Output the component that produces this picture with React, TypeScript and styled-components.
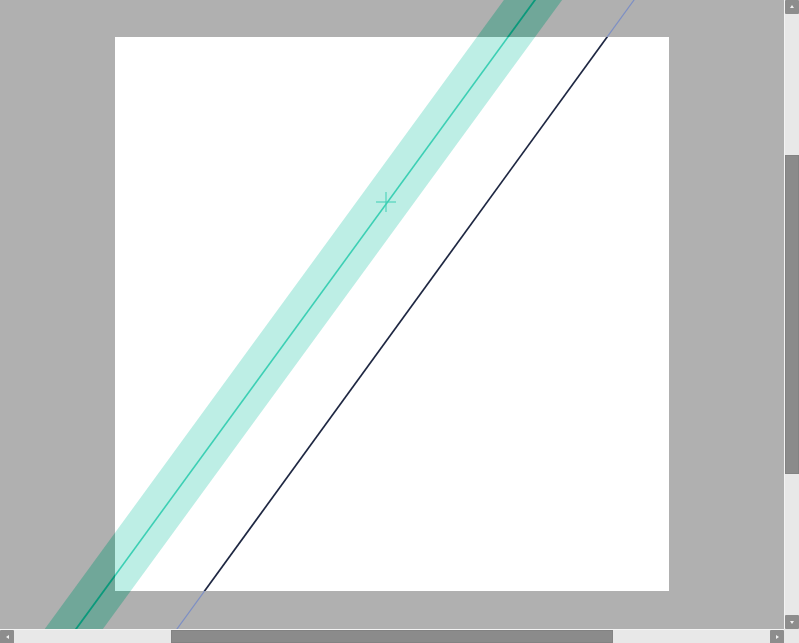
import React from 'react'
import styled, {createGlobalStyle} from 'styled-components'

const GlobalStyle = createGlobalStyle`
  html, body {
    margin: 0;
    padding: 0;
    overflow: hidden;
    background: #b0b0b0;
    font-family: "Liberation Sans", Arial, sans-serif;
  }
`

const Window = styled.div`
  width: 799px;
  height: 643px;
  display: grid;
  grid-template-columns: 784px 15px;
  grid-template-rows: 629px 14px;
`

const Viewport = styled.div`
  position: relative;
  overflow: hidden;
  background: #b0b0b0;
  padding: 37px 0 0 115px;
  box-sizing: border-box;
`

const Page = styled.div`
  width: 554px;
  height: 554px;
  background: #ffffff;
`

const Overlay = styled.svg`
  position: absolute;
  left: 0;
  top: 0;
  width: 784px;
  height: 629px;
`

const VTrack = styled.div`
  display: flex;
  flex-direction: column;
  background: #e8e8e8;
  border-left: 1px solid #f4f4f4;
  box-sizing: border-box;
`

const HTrack = styled.div`
  display: flex;
  background: #e8e8e8;
  border-top: 1px solid #f4f4f4;
  box-sizing: border-box;
`

const Corner = styled.div`
  background: #e8e8e8;
`

const ArrowButton = styled.div<{$dir: 'up' | 'down' | 'left' | 'right'}>`
  flex: none;
  width: 14px;
  height: 14px;
  background: #8d8d8d;
  border-radius: 1px;
  display: flex;
  align-items: center;
  justify-content: center;

  &::after {
    content: '';
    width: 0;
    height: 0;
    border: 2px solid transparent;
    ${p => p.$dir === 'up' && 'border-bottom: 3px solid #f0f0f0; border-top-width: 0; margin-top: -1px;'}
    ${p => p.$dir === 'down' && 'border-top: 3px solid #f0f0f0; border-bottom-width: 0;'}
    ${p => p.$dir === 'left' && 'border-right: 3px solid #f0f0f0; border-left-width: 0;'}
    ${p => p.$dir === 'right' && 'border-left: 3px solid #f0f0f0; border-right-width: 0;'}
  }
`

const Spacer = styled.div<{$size: number}>`
  flex: none;
  ${p => `flex-basis: ${p.$size}px;`}
`

const Thumb = styled.div<{$size: number}>`
  flex: none;
  ${p => `flex-basis: ${p.$size}px;`}
  background: #8b8b8b;
  border: 1px solid #838383;
  box-sizing: border-box;
`

const Fill = styled.div`
  flex: 1;
`

// guide geometry: x = a - k * y
const lineAt = (a: number, k: number) => ({
  x1: a - k * -40,
  y1: -40,
  x2: a - k * 680,
  y2: 680,
})

const PAGE = {x: 115, y: 37, w: 554, h: 554}

function Guides() {
  const band = lineAt(533, 0.73)
  const guide = lineAt(535, 0.7297)
  const stroke = lineAt(634, 0.7266)
  const cx = 386
  const cy = 202

  return (
    <Overlay viewBox="0 0 784 629">
      <defs>
        <clipPath id="inside">
          <rect x={PAGE.x} y={PAGE.y} width={PAGE.w} height={PAGE.h} />
        </clipPath>
        <clipPath id="outside">
          <path
            clipRule="evenodd"
            d={`M0 0H784V629H0Z M${PAGE.x} ${PAGE.y}V${PAGE.y + PAGE.h}H${PAGE.x + PAGE.w}V${PAGE.y}Z`}
          />
        </clipPath>
      </defs>

      <g clipPath="url(#outside)">
        <line {...band} stroke="#70a799" strokeWidth={47} />
        <line {...guide} stroke="#0b997b" strokeWidth={1.8} />
        <line {...stroke} stroke="#7d8fc4" strokeWidth={1.2} />
      </g>

      <g clipPath="url(#inside)">
        <line {...band} stroke="#bdeee5" strokeWidth={47} />
        <line {...guide} stroke="#3ccfb4" strokeWidth={1.6} />
        <line {...stroke} stroke="#1e2742" strokeWidth={1.7} />
        <line x1={cx - 10} y1={cy} x2={cx + 10} y2={cy} stroke="#3ccfb4" strokeWidth={1} />
        <line x1={cx} y1={cy - 10} x2={cx} y2={cy + 10} stroke="#3ccfb4" strokeWidth={1} />
      </g>
    </Overlay>
  )
}

export default function App() {
  return (
    <>
      <GlobalStyle />
      <Window>
        <Viewport>
          <Page />
          <Guides />
        </Viewport>

        <VTrack>
          <ArrowButton $dir="up" />
          <Spacer $size={141} />
          <Thumb $size={319} />
          <Fill />
          <ArrowButton $dir="down" />
        </VTrack>

        <HTrack>
          <ArrowButton $dir="left" />
          <Spacer $size={157} />
          <Thumb $size={442} />
          <Fill />
          <ArrowButton $dir="right" />
        </HTrack>

        <Corner />
      </Window>
    </>
  )
}
